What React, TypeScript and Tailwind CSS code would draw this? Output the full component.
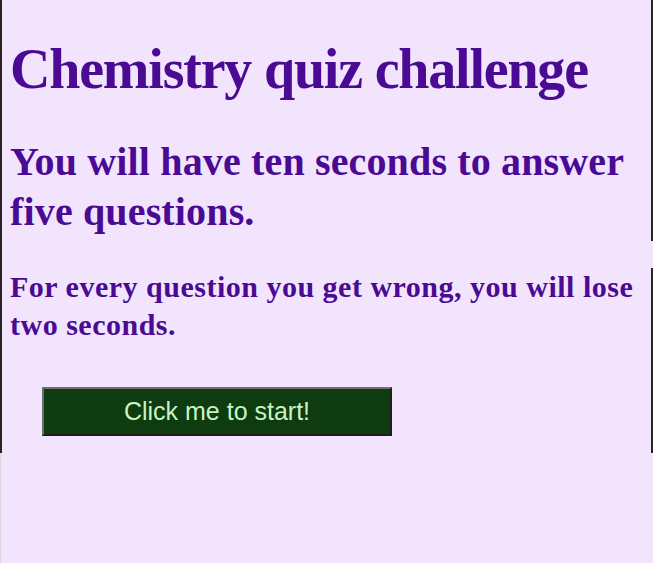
import React from "react";

export default function App() {
  const serif = { fontFamily: '"Liberation Serif", "Times New Roman", serif' };
  return (
    <div className="min-h-[563px] w-full bg-[#f2e4fd]">
      <div className="flex h-[453px]">
        <div className="w-[2px] shrink-0 bg-[#2a2326]" />
        <div className="flex-1 pl-[8px] pt-[37px] text-[#4a0a94]" style={serif}>
          <h1 className="m-0 text-[56px] leading-[64px] font-bold tracking-[-1.2px]">
            Chemistry quiz challenge
          </h1>
          <h2 className="mt-[36px] text-[40px] leading-[50px] font-bold tracking-[0.15px] pr-[4px]">
            You will have ten seconds to answer five questions.
          </h2>
          <h3 className="mt-[31px] text-[30px] leading-[37.5px] font-bold tracking-[0.5px]">
            For every question you get wrong, you will lose two seconds.
          </h3>
          <button
            className="ml-[32px] mt-[44px] flex h-[49px] w-[350px] items-center justify-center border-2 border-t-[#6e6e6e] border-l-[#6e6e6e] border-b-[#1e1e1e] border-r-[#1e1e1e] bg-[#0e3b10] text-[25px] text-[#c6f5c2]"
            style={{ fontFamily: '"Liberation Sans", Arial, sans-serif' }}
          >
            Click me to start!
          </button>
        </div>
        <div className="flex w-[2px] shrink-0 flex-col">
          <div className="h-[241px] bg-[#2a2326]" />
          <div className="h-[27px]" />
          <div className="flex-1 bg-[#2a2326]" />
        </div>
      </div>
      <div className="h-[110px] border-l border-[#dcd6de]" />
    </div>
  );
}
